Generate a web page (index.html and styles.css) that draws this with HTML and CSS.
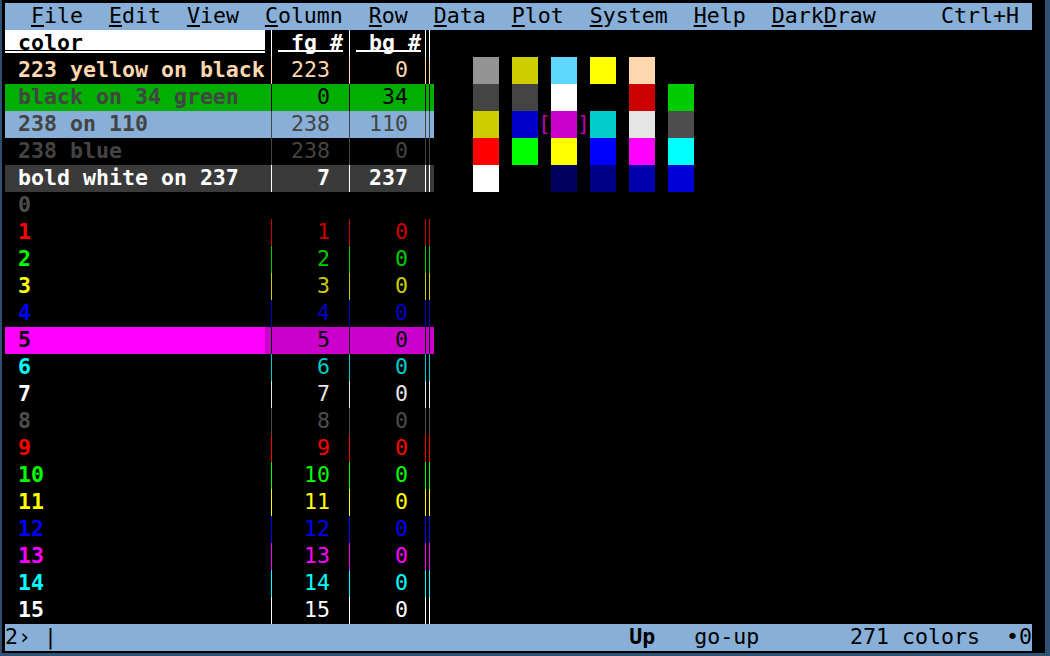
FILE: index.html
```html
<!DOCTYPE html>
<html>
<head>
<meta charset="utf-8">
<title>DarkDraw colors</title>
<link rel="stylesheet" href="styles.css">
</head>
<body>
<div class="win">
  <div class="menubar"><span>  <u>F</u>ile  <u>E</u>dit  <u>V</u>iew  <u>C</u>olumn  <u>R</u>ow  <u>D</u>ata  <u>P</u>lot  <u>S</u>ystem  <u>H</u>elp  <u>D</u>ark<u>D</u>raw</span><span>Ctrl+H </span></div>
  <div class="main">
    <div class="sheet">
      <div class="row hdr"><span class="nm">color</span><span class="sep"></span><span class="num"> fg #</span><span class="sep"></span><span class="num"> bg #</span><span class="dsep"></span></div>
      <div class="row c223"><span class="nm">223 yellow on black</span><span class="sep"></span><span class="num">223</span><span class="sep"></span><span class="num">0</span><span class="dsep"></span></div>
      <div class="row cgreen"><span class="nm">black on 34 green</span><span class="sep"></span><span class="num">0</span><span class="sep"></span><span class="num">34</span><span class="dsep"></span></div>
      <div class="row c110"><span class="nm">238 on 110</span><span class="sep"></span><span class="num">238</span><span class="sep"></span><span class="num">110</span><span class="dsep"></span></div>
      <div class="row c238"><span class="nm">238 blue</span><span class="sep"></span><span class="num">238</span><span class="sep"></span><span class="num">0</span><span class="dsep"></span></div>
      <div class="row c237"><span class="nm">bold white on 237</span><span class="sep"></span><span class="num">7</span><span class="sep"></span><span class="num">237</span><span class="dsep"></span></div>
      <div class="row k0"><span class="nm">0</span><span class="sep"></span><span class="num">0</span><span class="sep"></span><span class="num">0</span><span class="dsep"></span></div>
      <div class="row k1"><span class="nm">1</span><span class="sep"></span><span class="num">1</span><span class="sep"></span><span class="num">0</span><span class="dsep"></span></div>
      <div class="row k2"><span class="nm">2</span><span class="sep"></span><span class="num">2</span><span class="sep"></span><span class="num">0</span><span class="dsep"></span></div>
      <div class="row k3"><span class="nm">3</span><span class="sep"></span><span class="num">3</span><span class="sep"></span><span class="num">0</span><span class="dsep"></span></div>
      <div class="row k4"><span class="nm">4</span><span class="sep"></span><span class="num">4</span><span class="sep"></span><span class="num">0</span><span class="dsep"></span></div>
      <div class="row cur"><span class="nm">5</span><span class="sep"></span><span class="num">5</span><span class="sep"></span><span class="num">0</span><span class="dsep"></span></div>
      <div class="row k6"><span class="nm">6</span><span class="sep"></span><span class="num">6</span><span class="sep"></span><span class="num">0</span><span class="dsep"></span></div>
      <div class="row k7"><span class="nm">7</span><span class="sep"></span><span class="num">7</span><span class="sep"></span><span class="num">0</span><span class="dsep"></span></div>
      <div class="row k8"><span class="nm">8</span><span class="sep"></span><span class="num">8</span><span class="sep"></span><span class="num">0</span><span class="dsep"></span></div>
      <div class="row k9"><span class="nm">9</span><span class="sep"></span><span class="num">9</span><span class="sep"></span><span class="num">0</span><span class="dsep"></span></div>
      <div class="row k10"><span class="nm">10</span><span class="sep"></span><span class="num">10</span><span class="sep"></span><span class="num">0</span><span class="dsep"></span></div>
      <div class="row k11"><span class="nm">11</span><span class="sep"></span><span class="num">11</span><span class="sep"></span><span class="num">0</span><span class="dsep"></span></div>
      <div class="row k12"><span class="nm">12</span><span class="sep"></span><span class="num">12</span><span class="sep"></span><span class="num">0</span><span class="dsep"></span></div>
      <div class="row k13"><span class="nm">13</span><span class="sep"></span><span class="num">13</span><span class="sep"></span><span class="num">0</span><span class="dsep"></span></div>
      <div class="row k14"><span class="nm">14</span><span class="sep"></span><span class="num">14</span><span class="sep"></span><span class="num">0</span><span class="dsep"></span></div>
      <div class="row k15"><span class="nm">15</span><span class="sep"></span><span class="num">15</span><span class="sep"></span><span class="num">0</span><span class="dsep"></span></div>
    </div>
    <div class="canvas">
      <div class="crow"><span class="sw s-949494"></span><span class="g"></span><span class="sw s-cdcd00"></span><span class="g"></span><span class="sw s-5fd7ff"></span><span class="g"></span><span class="sw s-ffff00"></span><span class="g"></span><span class="sw s-ffd7af"></span><span class="g"></span><span class="sw"></span></div>
      <div class="crow"><span class="sw s-444444"></span><span class="g"></span><span class="sw s-444444"></span><span class="g"></span><span class="sw s-ffffff"></span><span class="g"></span><span class="sw"></span><span class="g"></span><span class="sw s-cc0000"></span><span class="g"></span><span class="sw s-00cc00"></span></div>
      <div class="crow"><span class="sw s-cdcd00"></span><span class="g"></span><span class="sw s-0000cc"></span><span class="g br">[</span><span class="sw s-cc00cc"></span><span class="g br">]</span><span class="sw s-00cccc"></span><span class="g"></span><span class="sw s-e5e5e5"></span><span class="g"></span><span class="sw s-4d4d4d"></span></div>
      <div class="crow"><span class="sw s-ff0000"></span><span class="g"></span><span class="sw s-00ff00"></span><span class="g"></span><span class="sw s-ffff00"></span><span class="g"></span><span class="sw s-0000ff"></span><span class="g"></span><span class="sw s-ff00ff"></span><span class="g"></span><span class="sw s-00ffff"></span></div>
      <div class="crow"><span class="sw s-ffffff"></span><span class="g"></span><span class="sw"></span><span class="g"></span><span class="sw s-00005f"></span><span class="g"></span><span class="sw s-000087"></span><span class="g"></span><span class="sw s-0000af"></span><span class="g"></span><span class="sw s-0000d7"></span></div>
    </div>
  </div>
  <div class="status"><span>2› |</span><span class="st-right"><b>Up</b>   go-up       271 colors  •0</span></div>
</div>
</body>
</html>
```
FILE: styles.css
```css
* { box-sizing: border-box; }

body {
  margin: 0;
  width: 1050px;
  height: 656px;
  overflow: hidden;
  background: #2f5274;
  font-family: "DejaVu Sans Mono", "Liberation Mono", monospace;
  font-size: 21.59px;
}

.win {
  background: #000;
  margin: 0 5px 0 2px;
  height: 653px;
  padding: 3px 0 0 3px;
}

.menubar {
  display: flex;
  justify-content: space-between;
  width: 1027px;
  height: 27px;
  line-height: 26px;
  background: #87afd7;
  color: #000;
  white-space: pre;
}

.menubar u {
  text-decoration-thickness: 2px;
  text-underline-offset: 2px;
}

.main {
  display: flex;
  height: 594px;
}

.sheet {
  width: 429px;
}

.row {
  display: flex;
  height: 27px;
  line-height: 26px;
  white-space: pre;
}

.nm {
  width: 260px;
  padding-left: 13px;
  font-weight: bold;
}

.num {
  width: 65px;
  text-align: right;
  padding-right: 13px;
}

.sep,
.dsep {
  width: 13px;
  display: flex;
  justify-content: center;
}

.sep::before {
  content: "";
  width: 1px;
  background: currentColor;
}

.dsep::before {
  content: "";
  width: 3px;
  border-left: 1px solid currentColor;
  border-right: 1px solid currentColor;
}

/* header */
.hdr { color: #fff; font-weight: bold; }
.hdr .nm {
  color: #000;
  background: linear-gradient(to bottom, #fff 0 20px, #000 20px 21px, #fff 21px 23px, #000 23px);
}
.hdr .num {
  padding-right: 0;
  background: linear-gradient(to bottom, transparent 0 20px, #fff 20px 22px, transparent 22px);
}

/* special rows */
.c223 { color: #ffd7af; }
.cgreen { background: #00af00; color: #000; }
.cgreen .nm { color: #444; }
.c110 { background: #87afd7; color: #444; }
.c238 { color: #444; }
.c237 { background: #3a3a3a; color: #fff; font-weight: bold; }

.k0 { color: #000; }
.k0 .nm { color: #4d4d4d; }
.k1 { color: #cc0000; }
.k1 .nm { color: #ff0000; }
.k2 { color: #00cc00; }
.k2 .nm { color: #00ff00; }
.k3 { color: #cdcd00; }
.k3 .nm { color: #ffff00; }
.k4 { color: #0000cc; }
.k4 .nm { color: #0000ff; }
.cur { background: #cc00cc; color: #000; }
.cur .nm { background: #ff00ff; }
.k6 { color: #00cccc; }
.k6 .nm { color: #00ffff; }
.k7 { color: #e5e5e5; }
.k7 .nm { color: #fff; }
.k8 { color: #4d4d4d; }
.k9 { color: #ff0000; }
.k10 { color: #00ff00; }
.k11 { color: #ffff00; }
.k12 { color: #0000ff; }
.k13 { color: #ff00ff; }
.k14 { color: #00ffff; }
.k15 { color: #fff; }

/* canvas */
.canvas {
  padding: 27px 0 0 39px;
}

.crow {
  display: flex;
  height: 27px;
  line-height: 26px;
}

.sw { width: 26px; }
.g { width: 13px; }
.br { color: #b800b8; }

.s-949494 { background: #949494; }
.s-cdcd00 { background: #cdcd00; }
.s-5fd7ff { background: #5fd7ff; }
.s-ffff00 { background: #ffff00; }
.s-ffd7af { background: #ffd7af; }
.s-444444 { background: #444444; }
.s-ffffff { background: #ffffff; }
.s-cc0000 { background: #cc0000; }
.s-00cc00 { background: #00cc00; }
.s-0000cc { background: #0000cc; }
.s-cc00cc { background: #cc00cc; }
.s-00cccc { background: #00cccc; }
.s-e5e5e5 { background: #e5e5e5; }
.s-4d4d4d { background: #4d4d4d; }
.s-ff0000 { background: #ff0000; }
.s-00ff00 { background: #00ff00; }
.s-0000ff { background: #0000ff; }
.s-ff00ff { background: #ff00ff; }
.s-00ffff { background: #00ffff; }
.s-00005f { background: #00005f; }
.s-000087 { background: #000087; }
.s-0000af { background: #0000af; }
.s-0000d7 { background: #0000d7; }

/* status */
.status {
  display: flex;
  justify-content: space-between;
  width: 1027px;
  height: 27px;
  line-height: 26px;
  background: #87afd7;
  color: #000;
  white-space: pre;
}
```
